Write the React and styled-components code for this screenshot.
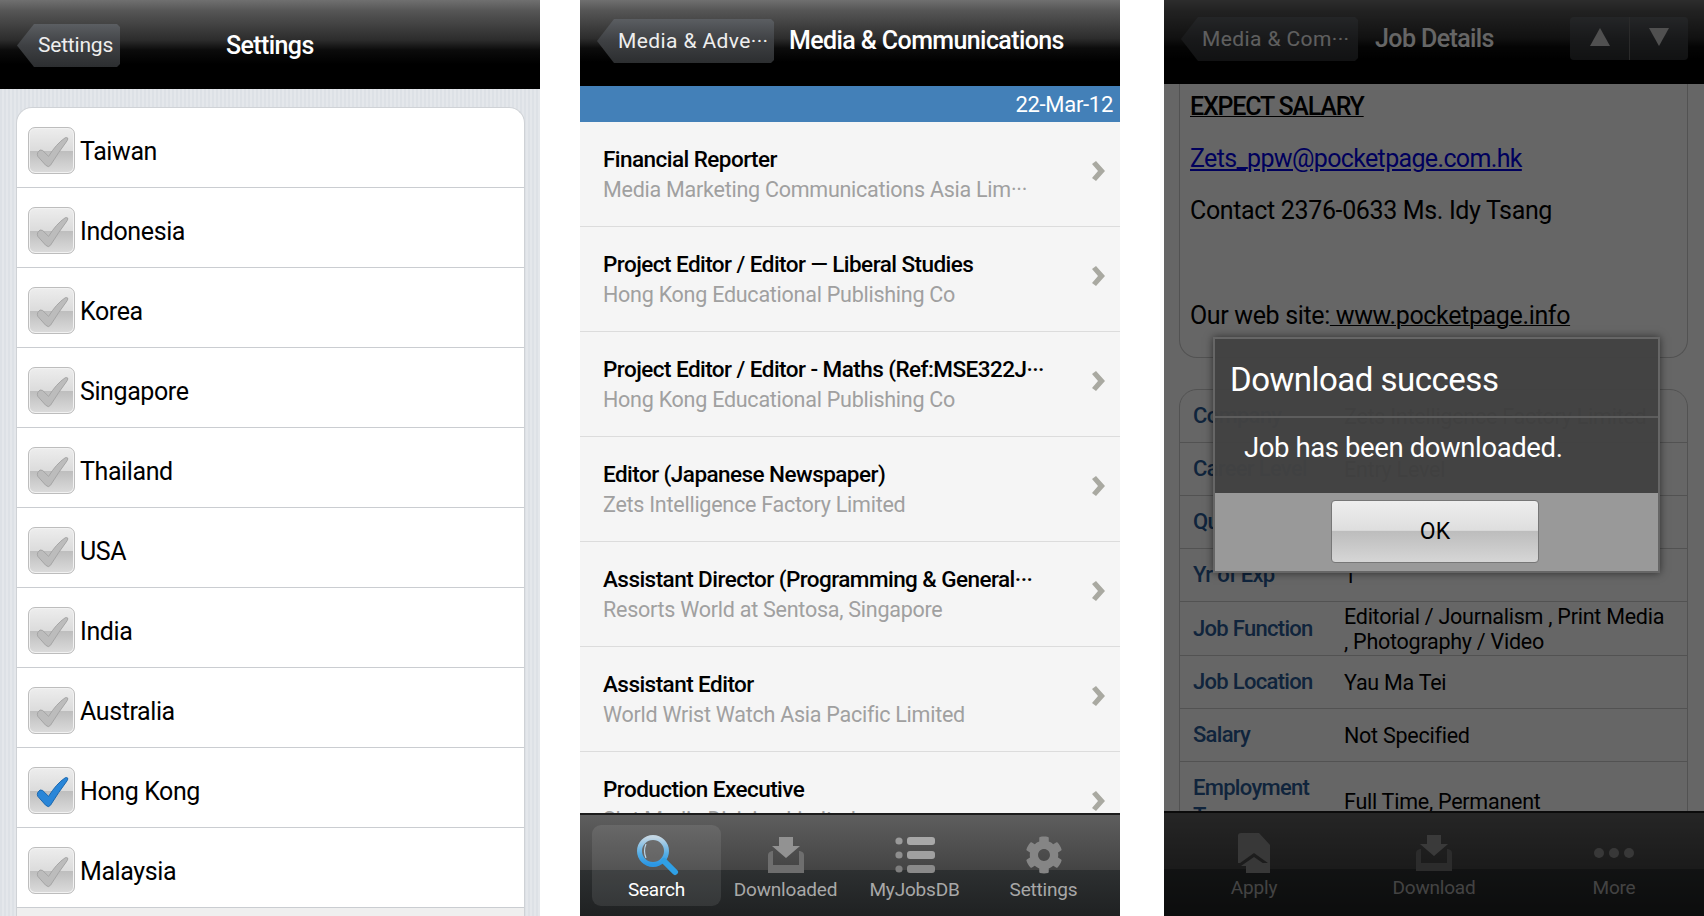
import React from "react";
import styled, { createGlobalStyle } from "styled-components";
import { FaCog } from "react-icons/fa";

const Global = createGlobalStyle`
  html, body { margin: 0; padding: 0; background: #fff; }
  body { font-family: Roboto, "Noto Sans", sans-serif; overflow: hidden; }
  * { box-sizing: border-box; }
`;

const Page = styled.div`
  display: grid;
  grid-template-columns: 580px 584px 540px;
  width: 1704px;
  height: 916px;
`;
const Phone = styled.div`
  position: relative;
  width: 540px;
  height: 916px;
  display: flex;
  flex-direction: column;
  overflow: hidden;
  background: #fff;
`;
const Header = styled.div`
  flex: none;
  height: ${p => p.$h}px;
  display: flex;
  align-items: flex-start;
  padding: ${p => p.$top}px 16px 0 ${p => p.$left}px;
  background: linear-gradient(#707070 0, #565656 12%, #2c2c2c 45%, #0c0c0c 56%, #000 72%, #000 100%);
`;
const Back = styled.div`
  flex: none;
  width: ${p => p.$w}px;
  height: ${p => p.$bh}px;
  padding: 0 0 1px 21px;
  display: flex;
  align-items: center;
  color: #eee;
  font-size: 21px;
  letter-spacing: ${p => p.$ls || -0.2}px;
  white-space: nowrap;
  background: linear-gradient(#5b5e62, #3e4043 50%, #2c2e30);
  clip-path: polygon(17px 0, calc(100% - 3px) 0, 100% 3px, 100% calc(100% - 3px), calc(100% - 3px) 100%, 17px 100%, 0 50%);
`;
const Title = styled.div`
  margin-left: ${p => p.$gap}px;
  height: ${p => p.$bh}px;
  line-height: ${p => p.$bh}px;
  color: #fff;
  font-size: 25px;
  font-weight: 500;
  letter-spacing: -0.6px;
  white-space: nowrap;
`;
const Arrows = styled.div`
  margin-left: auto;
  width: 118px;
  height: 43px;
  display: grid;
  grid-template-columns: 1fr 1fr;
  border-radius: 4px;
  background: linear-gradient(#5b5e62, #3e4043 50%, #2c2e30);
`;
const ArrowCell = styled.div`
  display: flex;
  align-items: center;
  justify-content: center;
  padding-bottom: 4px;
  border-left: ${p => (p.$split ? "1px solid #6a6a6a" : "none")};
`;

const SettingsBody = styled.div`
  flex: 1;
  min-height: 0;
  display: flex;
  padding: 18px 15px 0 16px;
  background: repeating-linear-gradient(90deg, #dde1e6 0 2px, #e4e7eb 2px 4px);
`;
const Card = styled.div`
  flex: 1;
  display: flex;
  flex-direction: column;
  background: #fff;
  border: 1px solid #cfd2d6;
  border-bottom: 0;
  border-radius: 16px 16px 0 0;
`;
const CountryRow = styled.div`
  flex: none;
  height: 80px;
  display: flex;
  align-items: center;
  gap: 5px;
  padding: 1px 0 0 11px;
  border-bottom: 1px solid #cacdd1;
`;
const Filler = styled.div`
  flex: 1;
  background: #efefef;
`;
const CheckBox = styled.div`
  width: 47px;
  height: 47px;
  flex: none;
  margin-top: 5px;
  border: 1px solid #bdbdbd;
  border-radius: 7px;
  background: linear-gradient(#ededed, #dcdcdc 50%, #bdbdbd 51%, #dcdcdc);
  box-shadow: inset 0 0 0 1px #f2f2f2;
`;
const CountryName = styled.span`
  padding-top: 6px;
  font-size: 25px;
  letter-spacing: -0.4px;
  color: #000;
`;

const DateBar = styled.div`
  flex: none;
  height: 36px;
  padding-right: 7px;
  text-align: right;
  line-height: 38px;
  font-size: 22px;
  letter-spacing: -0.3px;
  color: #fff;
  background: #4380b8;
`;
const JobList = styled.div`
  flex: 1;
  min-height: 0;
  overflow: hidden;
  background: #f5f5f5;
`;
const JobRow = styled.div`
  height: 105px;
  display: flex;
  align-items: flex-start;
  justify-content: space-between;
  padding: 22px 14px 0 23px;
  border-bottom: 1px solid #dcdcdc;
`;
const JobText = styled.div`
  display: flex;
  flex-direction: column;
  gap: 2px;
  min-width: 0;
`;
const JobTitle = styled.div`
  font-size: 22.5px;
  line-height: 30px;
  font-weight: 500;
  letter-spacing: -0.55px;
  color: #000;
  white-space: nowrap;
`;
const JobCompany = styled.div`
  font-size: 21.5px;
  line-height: 28px;
  letter-spacing: -0.25px;
  color: #a0a0a0;
  white-space: nowrap;
`;
const Chevron = styled.svg`
  flex: none;
  margin-top: 17px;
`;

const TabBar = styled.div`
  flex: none;
  height: ${p => p.$h}px;
  display: grid;
  grid-template-columns: repeat(${p => p.$n}, 1fr);
  padding: ${p => p.$pad};
  border-top: 2px solid #1c1c1c;
  background: linear-gradient(#5e5e5e 0, #444 54%, #2d3031 54.5%, #1f2122 100%);
`;
const Tab = styled.div`
  display: flex;
  flex-direction: column;
  align-items: center;
  padding-top: 9px;
  border-radius: 9px;
  background: ${p => (p.$active ? "rgba(255,255,255,.09)" : "none")};
`;
const TabIcon = styled.div`
  height: 42px;
  display: flex;
  align-items: center;
  justify-content: center;
`;
const TabLabel = styled.div`
  font-size: 19px;
  line-height: 28px;
  letter-spacing: -0.2px;
  color: ${p => (p.$active ? "#fff" : "#a8a8a8")};
`;

const DetailBody = styled.div`
  flex: 1;
  min-height: 0;
  overflow: hidden;
  padding: 0 16px 0 15px;
  background: #fff;
`;
const DescCard = styled.div`
  height: 274px;
  padding: 5px 0 0 10px;
  margin-bottom: 31px;
  border: 1px solid #ccc;
  border-top: 0;
  border-radius: 0 0 18px 18px;
  color: #000;
  font-size: 25px;
  letter-spacing: -0.35px;
`;
const DescLine = styled.div`
  height: ${p => p.$h}px;
  line-height: 36px;
  font-weight: ${p => (p.$bold ? 500 : 400)};
  letter-spacing: ${p => (p.$bold ? "-1.2px" : "inherit")};
  white-space: nowrap;
  a { color: #0000e6; letter-spacing: -0.65px; }
  u { text-decoration-thickness: 1px; }
`;
const InfoCard = styled.div`
  border: 1px solid #ccc;
  border-radius: 18px 18px 0 0;
`;
const InfoRow = styled.div`
  height: ${p => p.$h || 53}px;
  display: grid;
  grid-template-columns: 151px 1fr;
  align-items: center;
  padding-left: 13px;
  border-bottom: 1px solid #ccc;
`;
const InfoLabel = styled.div`
  font-size: 22px;
  line-height: 28px;
  font-weight: 500;
  letter-spacing: -0.7px;
  color: #2a5a96;
`;
const InfoValue = styled.div`
  padding-right: 16px;
  font-size: 21.5px;
  line-height: 25px;
  letter-spacing: -0.25px;
  color: #000;
`;
const Dim = styled.div`
  position: absolute;
  inset: 0;
  background: rgba(0, 0, 0, 0.6);
`;
const Dialog = styled.div`
  position: absolute;
  left: 49px;
  top: 337px;
  width: 447px;
  height: 236px;
  display: flex;
  flex-direction: column;
  border: 2px solid #666;
  box-shadow: 0 0 8px rgba(0, 0, 0, 0.55);
`;
const DialogHead = styled.div`
  height: 79px;
  flex: none;
  padding: 0 0 0 15px;
  line-height: 82px;
  font-size: 33px;
  letter-spacing: -0.5px;
  color: #fff;
  background: rgba(66, 66, 66, 0.97);
  border-bottom: 2px solid #5d5d5d;
`;
const DialogMsg = styled.div`
  height: 75px;
  flex: none;
  padding-left: 29px;
  line-height: 60px;
  font-size: 27.5px;
  letter-spacing: -0.4px;
  color: #fff;
  background: rgba(66, 66, 66, 0.97);
`;
const DialogFoot = styled.div`
  flex: 1;
  display: flex;
  justify-content: center;
  padding-top: 7px;
  padding-right: 3px;
  background: #999;
`;
const OkButton = styled.div`
  width: 208px;
  height: 63px;
  display: flex;
  align-items: center;
  justify-content: center;
  font-size: 23px;
  color: #000;
  border: 1px solid #777;
  border-radius: 4px;
  background: linear-gradient(#eee, #dedede 48%, #bdbdbd 50%, #d6d6d6);
`;

// icons
const Check = ({ on }) => (
  <svg width="45" height="45" viewBox="0 0 46 46">
    <path
      d="M9 25 Q11 21 14 23 L20 29 Q28 16 37 10 Q41 9 39 13 Q30 25 22 38 Q20 41 17 38 L9 29 Q8 27 9 25 Z"
      fill={on ? "#2a86d8" : "#bcbcbc"}
      stroke={on ? "#1a66ad" : "#a4a4a4"}
      strokeWidth="1"
    />
  </svg>
);
const Chev = () => (
  <Chevron width="14" height="20" viewBox="0 0 14 20">
    <path d="M0 3 L4 0 L13 10 L4 20 L0 17 L6 10 Z" fill="#a9a9a1" />
  </Chevron>
);
const SearchIcon = () => (
  <svg width="44" height="42" viewBox="0 0 44 42">
    <defs>
      <linearGradient id="sg" x1="0" y1="0" x2="0" y2="1">
        <stop offset="0" stopColor="#c3d6e4" />
        <stop offset="0.6" stopColor="#55aee6" />
        <stop offset="1" stopColor="#2b97e4" />
      </linearGradient>
    </defs>
    <circle cx="18" cy="17" r="13.5" fill="rgba(255,255,255,.08)" stroke="url(#sg)" strokeWidth="5" />
    <path d="M29 27 L40 38" stroke="#2fa0e6" strokeWidth="6" strokeLinecap="round" />
    <path d="M11 10 Q8 17 11 24" stroke="#b8d4e8" strokeWidth="1.2" fill="none" />
  </svg>
);
const DownloadIcon = () => (
  <svg width="40" height="38" viewBox="0 0 40 38">
    <path d="M13 1 H27 V10 H34 L20 22 L6 10 H13 Z" fill="#929292" />
    <path d="M2 19 Q2 16 6 15 L7 15 V29 H33 V15 L34 15 Q38 16 38 19 V37 H2 Z" fill="#6e6e6e" />
  </svg>
);
const ListIcon = () => (
  <svg width="42" height="38" viewBox="0 0 42 38">
    <circle cx="5" cy="5" r="3.6" fill="#9a9a9a" />
    <circle cx="5" cy="19" r="3.6" fill="#8e8e8e" />
    <circle cx="5" cy="33" r="3.6" fill="#7e7e7e" />
    <rect x="13" y="1" width="28" height="8" rx="3" fill="#a8a8a8" />
    <rect x="13" y="15" width="28" height="8" rx="3" fill="#a0a0a0" />
    <rect x="13" y="29" width="28" height="8" rx="3" fill="#8a8a8a" />
  </svg>
);
const ApplyIcon = () => (
  <svg width="34" height="40" viewBox="0 0 34 40">
    <path d="M4 0 H22 L33 12 V40 H24 V30 H31 L17 20 L3 30 H1 V3 Q1 0 4 0 Z" fill="#8c8c8c" />
    <path d="M17 24 L30 33 H25 V40 H9 V33 H4 Z" fill="#8c8c8c" />
  </svg>
);
const DotsIcon = () => (
  <svg width="42" height="12" viewBox="0 0 42 12">
    <circle cx="6" cy="6" r="5" fill="#8c8c8c" />
    <circle cx="21" cy="6" r="5" fill="#8c8c8c" />
    <circle cx="36" cy="6" r="5" fill="#8c8c8c" />
  </svg>
);
const Tri = ({ up }) => (
  <svg width="20" height="18" viewBox="0 0 20 18">
    <path d={up ? "M10 0 L20 18 H0 Z" : "M0 0 H20 L10 18 Z"} fill="#c8c8c8" />
  </svg>
);

const countries = ["Taiwan", "Indonesia", "Korea", "Singapore", "Thailand", "USA", "India", "Australia", "Hong Kong", "Malaysia"];
const jobs = [
  ["Financial Reporter", "Media Marketing Communications Asia Lim···"],
  ["Project Editor / Editor — Liberal Studies", "Hong Kong Educational Publishing Co"],
  ["Project Editor / Editor - Maths (Ref:MSE322J···", "Hong Kong Educational Publishing Co"],
  ["Editor (Japanese Newspaper)", "Zets Intelligence Factory Limited"],
  ["Assistant Director (Programming & General···", "Resorts World at Sentosa, Singapore"],
  ["Assistant Editor", "World Wrist Watch Asia Pacific Limited"],
  ["Production Executive", "Slot Media Division Limited"],
];
const details = [
  ["Company", "Zets Intelligence Factory Limited"],
  ["Career Level", "Entry Level"],
  ["Qualification", "Degree"],
  ["Yr of Exp", "1"],
  ["Job Function", "Editorial / Journalism , Print Media , Photography / Video", 54],
  ["Job Location", "Yau Ma Tei"],
  ["Salary", "Not Specified"],
  ["Employment Type", "Full Time, Permanent", 80],
];

export default function App() {
  return (
    <Page>
      <Global />
      <Phone>
        <Header $h={89} $top={24} $left={17}>
          <Back $w={103} $bh={43}>Settings</Back>
          <Title $gap={106} $bh={43}>Settings</Title>
        </Header>
        <SettingsBody>
          <Card>
            {countries.map(c => (
              <CountryRow key={c}>
                <CheckBox><Check on={c === "Hong Kong"} /></CheckBox>
                <CountryName>{c}</CountryName>
              </CountryRow>
            ))}
            <Filler />
          </Card>
        </SettingsBody>
      </Phone>

      <Phone>
        <Header $h={86} $top={19} $left={17}>
          <Back $w={177} $bh={44} $ls={0.4}>Media &amp; Adve···</Back>
          <Title $gap={15} $bh={44}>Media &amp; Communications</Title>
        </Header>
        <DateBar>22-Mar-12</DateBar>
        <JobList>
          {jobs.map(([t, c]) => (
            <JobRow key={t}>
              <JobText>
                <JobTitle>{t}</JobTitle>
                <JobCompany>{c}</JobCompany>
              </JobText>
              <Chev />
            </JobRow>
          ))}
        </JobList>
        <TabBar $h={103} $n={4} $pad="10px 12px 10px">
          <Tab $active>
            <TabIcon><SearchIcon /></TabIcon>
            <TabLabel $active>Search</TabLabel>
          </Tab>
          <Tab>
            <TabIcon><DownloadIcon /></TabIcon>
            <TabLabel>Downloaded</TabLabel>
          </Tab>
          <Tab>
            <TabIcon><ListIcon /></TabIcon>
            <TabLabel>MyJobsDB</TabLabel>
          </Tab>
          <Tab>
            <TabIcon><FaCog size={38} color="#858585" /></TabIcon>
            <TabLabel>Settings</TabLabel>
          </Tab>
        </TabBar>
      </Phone>

      <Phone>
        <Header $h={84} $top={17} $left={17}>
          <Back $w={177} $bh={44} $ls={0.4}>Media &amp; Com···</Back>
          <Title $gap={17} $bh={44}>Job Details</Title>
          <Arrows>
            <ArrowCell><Tri up /></ArrowCell>
            <ArrowCell $split><Tri /></ArrowCell>
          </Arrows>
        </Header>
        <DetailBody>
          <DescCard>
            <DescLine $h={52} $bold><u>EXPECT SALARY</u></DescLine>
            <DescLine $h={52}><a href="#mail">Zets_ppw@pocketpage.com.hk</a></DescLine>
            <DescLine $h={105}>Contact 2376-0633 Ms. Idy Tsang</DescLine>
            <DescLine $h={36}>Our web site:<u> www.pocketpage.info</u></DescLine>
          </DescCard>
          <InfoCard>
            {details.map(([l, v, h]) => (
              <InfoRow key={l} $h={h}>
                <InfoLabel>{l}</InfoLabel>
                <InfoValue>{v}</InfoValue>
              </InfoRow>
            ))}
          </InfoCard>
        </DetailBody>
        <TabBar $h={105} $n={3} $pad="10px 0">
          <Tab>
            <TabIcon><ApplyIcon /></TabIcon>
            <TabLabel>Apply</TabLabel>
          </Tab>
          <Tab>
            <TabIcon><DownloadIcon /></TabIcon>
            <TabLabel>Download</TabLabel>
          </Tab>
          <Tab>
            <TabIcon><DotsIcon /></TabIcon>
            <TabLabel>More</TabLabel>
          </Tab>
        </TabBar>
        <Dim />
        <Dialog>
          <DialogHead>Download success</DialogHead>
          <DialogMsg>Job has been downloaded.</DialogMsg>
          <DialogFoot><OkButton>OK</OkButton></DialogFoot>
        </Dialog>
      </Phone>
    </Page>
  );
}
